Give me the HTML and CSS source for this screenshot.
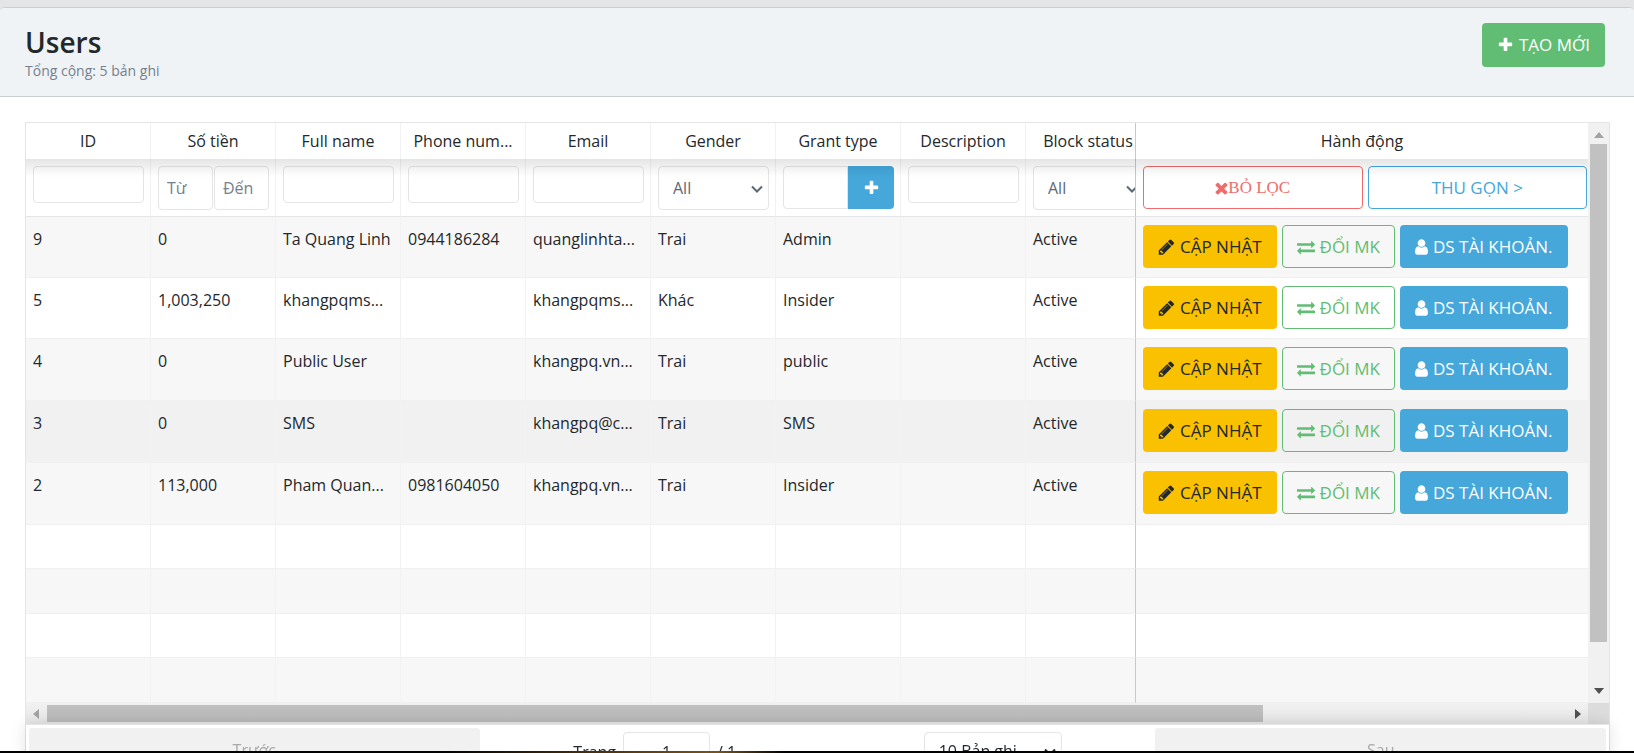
FILE: index.html
```html
<!DOCTYPE html>
<html lang="vi">
<head>
<meta charset="utf-8">
<title>Users</title>
<link rel="stylesheet" href="styles.css">
</head>
<body>
<svg class="sprite" aria-hidden="true">
  <symbol id="plus" viewBox="0 0 1792 1792"><path d="M1600 736v192q0 40-28 68t-68 28h-416v416q0 40-28 68t-68 28h-192q-40 0-68-28t-28-68v-416h-416q-40 0-68-28t-28-68v-192q0-40 28-68t68-28h416v-416q0-40 28-68t68-28h192q40 0 68 28t28 68v416h416q40 0 68 28t28 68z"/></symbol>
  <symbol id="pencil" viewBox="128 0 1536 1792"><path d="M491 1536l91-91-235-235-91 91v107h128v128h107zm523-928q0-22-22-22-10 0-17 7l-542 542q-7 7-7 17 0 22 22 22 10 0 17-7l542-542q7-7 7-17zm-54-192l416 416-832 832h-416v-416zm683 96q0 53-37 90l-166 166-416-416 166-165q36-38 90-38 53 0 91 38l235 234q37 39 37 91z"/></symbol>
  <symbol id="exchange" viewBox="0 0 1792 1792"><path d="M1792 1184v192q0 13-9.500 22.500t-22.500 9.500h-1376v192q0 13-9.500 22.500t-22.500 9.500q-12 0-24-10l-319-320q-9-9-9-22 0-14 9-23l320-320q9-9 23-9 13 0 22.500 9.500t9.500 22.500v192h1376q13 0 22.500 9.500t9.500 22.500zm0-544q0 14-9 23l-320 320q-9 9-23 9-13 0-22.500-9.500t-9.500-22.500v-192h-1376q-13 0-22.500-9.500t-9.500-22.500v-192q0-13 9.500-22.500t22.500-9.500h1376v-192q0-14 9-23t23-9q12 0 24 10l319 319q9 9 9 23z"/></symbol>
  <symbol id="user" viewBox="256 0 1280 1792"><path d="M1536 1399q0 109-62.500 187t-150.500 78h-854q-88 0-150.500-78t-62.500-187q0-85 8.500-160.500t31.500-152 58.500-131 94-89 134.500-34.500q131 128 313 128t313-128q76 0 134.500 34.500t94 89 58.500 131 31.500 152 8.500 160.500zm-256-887q0 159-112.500 271.500t-271.500 112.500-271.500-112.500-112.500-271.500 112.500-271.500 271.500-112.500 271.500 112.500 112.500 271.500z"/></symbol>
  <symbol id="times" viewBox="256 0 1280 1792"><path d="M1490 1322q0 40-28 68l-136 136q-28 28-68 28t-68-28l-294-294-294 294q-28 28-68 28t-68-28l-136-136q-28-28-28-68t28-68l294-294-294-294q-28-28-28-68t28-68l136-136q28-28 68-28t68 28l294 294 294-294q28-28 68-28t68 28l136 136q28 28 28 68t-28 68l-294 294 294 294q28 28 28 68z"/></symbol>
  <symbol id="chevron" viewBox="0 0 12 8"><path d="M1 1.500L6 6.500L11 1.500" fill="none" stroke="currentColor" stroke-width="2"/></symbol>
  <symbol id="arrow" viewBox="0 0 10 6"><path d="M0 6L5 0L10 6z"/></symbol>
</svg>
<div class="app">
  <main class="card">
    <header class="card-header">
      <div>
        <h1 class="title">Users</h1>
        <p class="subtitle">Tổng cộng: 5 bản ghi</p>
      </div>
      <button class="btn btn-success" type="button"><svg class="icon"><use href="#plus"/></svg>TẠO MỚI</button>
    </header>
    <div class="card-body">
      <section class="grid">
        <div class="viewport">
          <table class="table">
            <colgroup><col span="9" class="col"><col class="col-actions"></colgroup>
            <thead>
              <tr class="heads"><th>ID</th><th>Số tiền</th><th>Full name</th><th>Phone num...</th><th>Email</th><th>Gender</th><th>Grant type</th><th>Description</th><th>Block status</th><th class="pinned">Hành động</th></tr>
              <tr class="filters">
                <td><input class="field" type="text" aria-label="ID"></td>
                <td><div class="range"><input class="field tall" type="text" placeholder="Từ" aria-label="Số tiền từ"><input class="field tall" type="text" placeholder="Đến" aria-label="Số tiền đến"></div></td>
                <td><input class="field" type="text" aria-label="Full name"></td>
                <td><input class="field" type="text" aria-label="Phone number"></td>
                <td><input class="field" type="text" aria-label="Email"></td>
                <td><div class="select"><select class="field tall" aria-label="Gender"><option>All</option></select><svg class="chevron"><use href="#chevron"/></svg></div></td>
                <td><div class="group"><input class="field tall" type="text" aria-label="Grant type"><button class="btn btn-info" type="button" aria-label="Thêm"><svg class="icon"><use href="#plus"/></svg></button></div></td>
                <td><input class="field" type="text" aria-label="Description"></td>
                <td><div class="select"><select class="field tall" aria-label="Block status"><option>All</option></select><svg class="chevron"><use href="#chevron"/></svg></div></td>
                <td class="pinned"><div class="actions even"><button class="btn btn-clear" type="button"><svg class="icon narrow"><use href="#times"/></svg>BỎ LỌC</button><button class="btn btn-collapse" type="button">THU GỌN &gt;</button></div></td>
              </tr>
            </thead>
            <tbody>
              <tr class="short"><td>9</td><td>0</td><td>Ta Quang Linh</td><td>0944186284</td><td>quanglinhta...</td><td>Trai</td><td>Admin</td><td></td><td>Active</td>
                <td class="pinned"><div class="actions"><button class="btn btn-warning" type="button"><svg class="icon"><use href="#pencil"/></svg>CẬP NHẬT</button><button class="btn btn-outline" type="button"><svg class="icon wide"><use href="#exchange"/></svg>ĐỔI MK</button><button class="btn btn-info" type="button"><svg class="icon narrow"><use href="#user"/></svg>DS TÀI KHOẢN.</button></div></td></tr>
              <tr class="short"><td>5</td><td>1,003,250</td><td>khangpqms...</td><td></td><td>khangpqms...</td><td>Khác</td><td>Insider</td><td></td><td>Active</td>
                <td class="pinned"><div class="actions"><button class="btn btn-warning" type="button"><svg class="icon"><use href="#pencil"/></svg>CẬP NHẬT</button><button class="btn btn-outline" type="button"><svg class="icon wide"><use href="#exchange"/></svg>ĐỔI MK</button><button class="btn btn-info" type="button"><svg class="icon narrow"><use href="#user"/></svg>DS TÀI KHOẢN.</button></div></td></tr>
              <tr><td>4</td><td>0</td><td>Public User</td><td></td><td>khangpq.vn...</td><td>Trai</td><td>public</td><td></td><td>Active</td>
                <td class="pinned"><div class="actions"><button class="btn btn-warning" type="button"><svg class="icon"><use href="#pencil"/></svg>CẬP NHẬT</button><button class="btn btn-outline" type="button"><svg class="icon wide"><use href="#exchange"/></svg>ĐỔI MK</button><button class="btn btn-info" type="button"><svg class="icon narrow"><use href="#user"/></svg>DS TÀI KHOẢN.</button></div></td></tr>
              <tr class="active"><td>3</td><td>0</td><td>SMS</td><td></td><td>khangpq@c...</td><td>Trai</td><td>SMS</td><td></td><td>Active</td>
                <td class="pinned"><div class="actions"><button class="btn btn-warning" type="button"><svg class="icon"><use href="#pencil"/></svg>CẬP NHẬT</button><button class="btn btn-outline" type="button"><svg class="icon wide"><use href="#exchange"/></svg>ĐỔI MK</button><button class="btn btn-info" type="button"><svg class="icon narrow"><use href="#user"/></svg>DS TÀI KHOẢN.</button></div></td></tr>
              <tr><td>2</td><td>113,000</td><td>Pham Quan...</td><td>0981604050</td><td>khangpq.vn...</td><td>Trai</td><td>Insider</td><td></td><td>Active</td>
                <td class="pinned"><div class="actions"><button class="btn btn-warning" type="button"><svg class="icon"><use href="#pencil"/></svg>CẬP NHẬT</button><button class="btn btn-outline" type="button"><svg class="icon wide"><use href="#exchange"/></svg>ĐỔI MK</button><button class="btn btn-info" type="button"><svg class="icon narrow"><use href="#user"/></svg>DS TÀI KHOẢN.</button></div></td></tr>
              <tr class="empty"><td></td><td></td><td></td><td></td><td></td><td></td><td></td><td></td><td></td><td class="pinned"></td></tr>
              <tr class="empty"><td></td><td></td><td></td><td></td><td></td><td></td><td></td><td></td><td></td><td class="pinned"></td></tr>
              <tr class="empty"><td></td><td></td><td></td><td></td><td></td><td></td><td></td><td></td><td></td><td class="pinned"></td></tr>
              <tr class="empty"><td></td><td></td><td></td><td></td><td></td><td></td><td></td><td></td><td></td><td class="pinned"></td></tr>
            </tbody>
          </table>
        </div>
        <div class="bar vertical"><svg class="arrow dim"><use href="#arrow"/></svg><div class="track"><div class="thumb"></div></div><svg class="arrow down"><use href="#arrow"/></svg></div>
        <div class="bar horizontal"><svg class="arrow dim left"><use href="#arrow"/></svg><div class="track"><div class="thumb"></div></div><svg class="arrow right"><use href="#arrow"/></svg></div>
        <div class="corner"></div>
        <nav class="pager">
          <button class="page-btn" type="button" disabled>Trước</button>
          <div class="page-center">
            <label class="page-jump">Trang <input class="field page-number" type="text" value="1"> / 1</label>
            <div class="select"><select class="field page-size" aria-label="Số bản ghi"><option>10 Bản ghi</option></select><svg class="chevron"><use href="#chevron"/></svg></div>
          </div>
          <button class="page-btn" type="button" disabled>Sau</button>
        </nav>
      </section>
    </div>
  </main>
  <div class="desktop-edge"></div>
</div>
</body>
</html>
```
FILE: styles.css
```css
* { box-sizing: border-box; }

body {
  margin: 0;
  background: #e4e5e6;
  color: #23282c;
  font: 16px/26px "Open Sans", "Noto Sans", sans-serif;
}

button, input, select { font: inherit; color: inherit; margin: 0; }

.sprite { position: absolute; width: 0; height: 0; }

.app {
  display: flex;
  flex-direction: column;
  height: 100vh;
  padding-top: 7px;
  overflow: hidden;
}

.card {
  flex: 1;
  min-height: 0;
  overflow: hidden;
  background: #fff;
  border-top: 1px solid #c8ced3;
  border-radius: 5px 5px 0 0;
}

.card-header {
  display: flex;
  justify-content: space-between;
  align-items: flex-start;
  padding: 15px 29px 15px 25px;
  background: #f0f3f5;
  border-bottom: 1px solid #c8ced3;
}

.title { margin: 0; font-size: 28px; line-height: 38px; font-weight: 600; }
.subtitle { margin: 0; font-size: 14px; line-height: 20px; color: #73818f; }

.btn {
  display: inline-flex;
  align-items: center;
  justify-content: center;
  gap: 5px;
  height: 44px;
  padding: 0 14px;
  border: 1px solid transparent;
  border-radius: 4px;
  background: transparent;
  font-size: 17px;
  white-space: nowrap;
}
.btn-success { background: #61bd73; color: #fff; }
.btn-info { background: #45a7da; color: #fff; }
.btn-warning { background: #fac100; }
.btn-outline { border-color: #61bd73; color: #61bd73; }
.btn-collapse { border-color: #45a7da; color: #45a7da; }
.btn-clear {
  gap: 0;
  border-color: #f16b6b;
  color: #f16b6b;
  font-family: "Liberation Serif", serif;
}

.icon { width: 17px; height: 18px; flex: none; fill: currentColor; }
.icon.narrow { width: 13px; }
.icon.wide { width: 18px; }

.card-body { padding: 25px 24px 25px 25px; }

.grid {
  display: grid;
  grid-template-columns: minmax(0, 1fr) 21px;
  border: 1px solid #e4e5e6;
}

.viewport { overflow: hidden; }

.table {
  width: 100%;
  min-width: 1578px;
  table-layout: fixed;
  border-collapse: separate;
  border-spacing: 0;
}
.col { width: 125px; }
.col-actions { width: 453px; }

.table th, .table td {
  overflow: hidden;
  padding: 9px 7px 0;
  border-right: 1px solid #f2f2f2;
  border-bottom: 1px solid #f0f0f0;
  text-overflow: ellipsis;
  white-space: nowrap;
  vertical-align: top;
}
.table .pinned {
  position: sticky;
  right: 0;
  z-index: 2;
  border-left: 1px solid #c8c8c8;
  border-right: 0;
}

.heads th {
  height: 36px;
  padding: 5px 6px;
  border-bottom: 0;
  background: #fff;
  font-weight: 400;
  text-align: center;
}
.filters td {
  height: 58px;
  padding: 7px 6px 6px 7px;
  border-bottom-color: #e4e5e6;
  background: #fff;
}
.filters .pinned { padding-right: 1px; }

/* Shadow cast by the heading row over the filters */
thead { position: relative; }
thead::after {
  content: "";
  position: absolute;
  z-index: 3;
  top: 36px;
  left: 0;
  right: 0;
  height: 18px;
  background: linear-gradient(rgba(0, 0, 0, .1), rgba(0, 0, 0, 0));
  pointer-events: none;
}

tbody tr { height: 62px; }
tbody tr.short { height: 61px; }
tbody tr.empty { height: 44px; }
tbody tr.empty:nth-child(odd) { height: 45px; }
tbody tr td { background: #fff; }
tbody tr:nth-child(odd) td { background: #f7f7f7; }
tbody tr.active td { background: #f1f1f1; }
tbody .pinned { padding-top: 8px; }

.actions { display: flex; gap: 5px; }
.actions.even .btn { flex: 1; }
.actions .btn { height: 43px; }

.field {
  display: block;
  width: 100%;
  height: 37px;
  padding: 0 8px;
  border: 1px solid #e4e5e6;
  border-radius: 4px;
  background: #fff;
  outline: 0;
}
.field::placeholder { color: #73818f; opacity: 1; }
.tall { height: 44px; }
.range { display: flex; gap: 1px; }

.select { position: relative; }
.select .field { appearance: none; padding: 0 14px; color: #5c6873; }
.chevron {
  position: absolute;
  top: 19px;
  right: 6px;
  width: 12px;
  height: 8px;
  color: #5c6873;
  pointer-events: none;
}

.group { display: flex; }
.group .field { flex: 1; min-width: 0; height: 43px; border-radius: 4px 0 0 4px; }
.group .btn { width: 46px; height: 43px; padding: 0; border-radius: 0 4px 4px 0; }

.bar { display: flex; align-items: center; background: #f1f1f1; }
.vertical { flex-direction: column; padding: 9px 2px; }
.horizontal { height: 21px; padding: 0 5px; background: linear-gradient(#f1f1f1, #e6e6e6); }
.track { flex: 1; }
.vertical .track { width: 17px; margin: 6px 0 8px; }
.vertical .thumb { height: 93%; background: #c1c1c1; }
.horizontal .track { margin: 0 6px; }
.horizontal .thumb { width: 80%; height: 17px; background: linear-gradient(#c0c0c0, #b9b9b9); }
.arrow { width: 10px; height: 6px; flex: none; fill: #505050; }
.arrow.dim { fill: #a3a3a3; }
.down { transform: rotate(180deg); }
.left { transform: rotate(-90deg); }
.right { transform: rotate(90deg); }
.corner { background: #dcdcdc; }

.pager {
  position: relative;
  z-index: 4;
  grid-column: 1 / -1;
  display: flex;
  padding: 3px;
  background: #fff;
  border-top: 1px solid #e4e5e6;
  box-shadow: 0 0 15px rgba(0, 0, 0, .12);
}
.page-btn {
  flex: 2;
  height: 44px;
  padding: 0;
  border: 0;
  border-radius: 3px;
  background: #f1f1f1;
  color: #a9a9a9;
}
.page-center {
  flex: 3;
  display: flex;
  align-items: flex-start;
  justify-content: space-around;
  padding-top: 4px;
}
.page-jump { display: flex; align-items: center; gap: 7px; }
.page-number { width: 87px; height: 40px; text-align: center; }
.page-size { width: 138px; height: 38px; }
.select .page-size { color: #23282c; }
.page-size + .chevron { top: 16px; color: #23282c; }

.desktop-edge {
  height: 2px;
  background: linear-gradient(90deg, #000 27%, #57370f 38%, #7a541a 44%, #000 48%);
}
```
